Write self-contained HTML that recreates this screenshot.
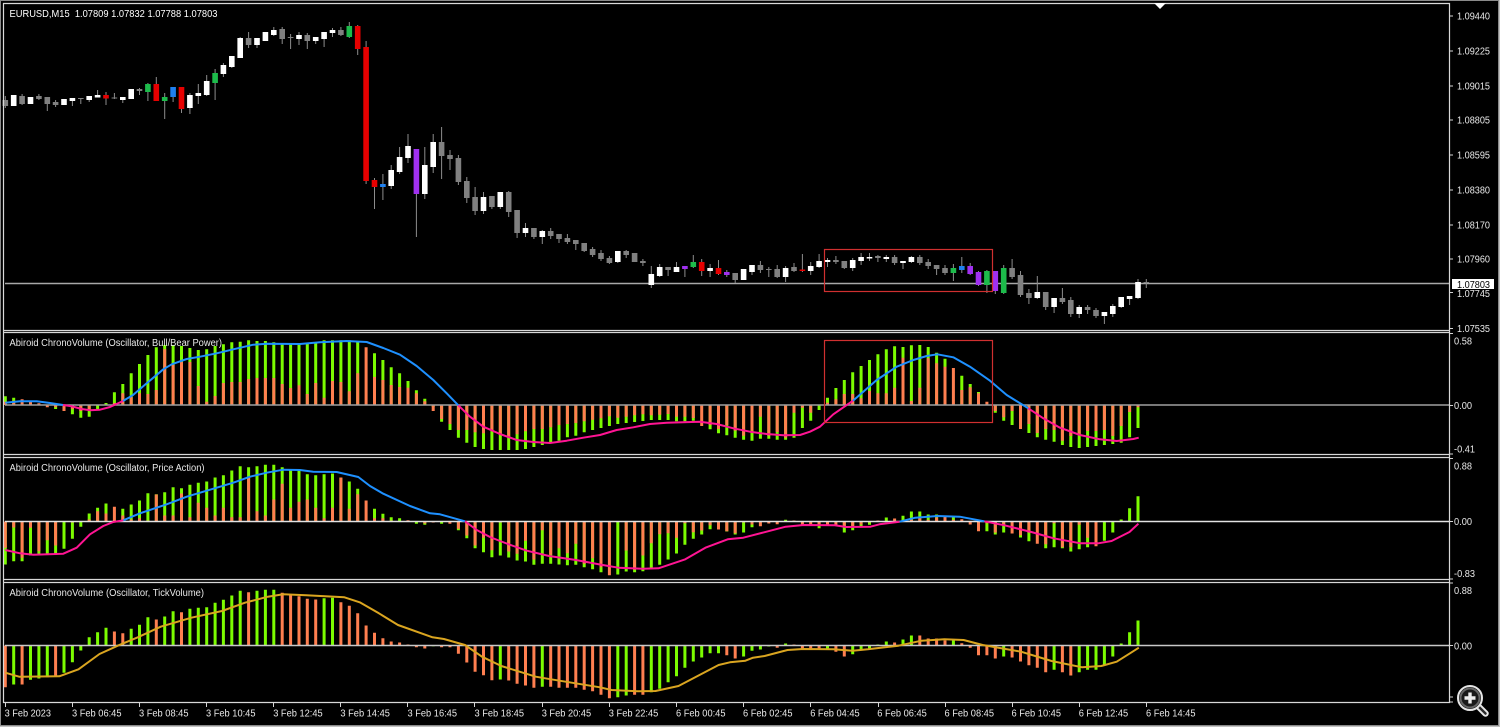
<!DOCTYPE html>
<html lang="en"><head><meta charset="utf-8"><title>EURUSD,M15</title>
<style>html,body{margin:0;padding:0;background:#000;width:1500px;height:727px;overflow:hidden}svg{display:block;filter:blur(.35px)}text{font-family:"Liberation Sans",sans-serif;font-size:10px;fill:#e8e8e8}</style></head>
<body>
<svg width="1500" height="727" viewBox="0 0 1500 727" xmlns="http://www.w3.org/2000/svg">
<rect width="1500" height="727" fill="#000"/>
<!-- window edges -->
<path d="M.5 0V727M0 .5H1500M1498.5 0V727M0 725.5H1500" stroke="#8a8a8a" fill="none"/>
<path d="M1499.5 0V727M0 726.5H1500" stroke="#c0c0c0" fill="none"/>
<!-- price line -->
<path d="M5 283.5H1450" stroke="#a8a8a8" stroke-width="1.4"/>
<!-- wicks -->
<path fill="none" stroke="#8c8c8c" d="M5.3 96V108M22.1 94V105M38.9 94V100M47.3 97V111M55.6 100V107M72.4 98V106M80.8 98V104M89.2 96V102M97.6 90V97M106 92V105M114.4 93V99M122.8 97V103M139.5 88V95M147.9 83V101M156.3 77V101M164.7 93V119M173.1 87V102M181.5 87V113M189.9 93V114M198.3 84V104M206.7 75V96M215.1 69V100M223.4 63V77M231.8 56V68M240.2 37V58M248.6 32V48M257 38V48M273.8 27V36M282.2 27V44M290.6 34V49M299 32V45M307.3 33V49M315.7 37V44M324.1 32V47M332.5 28V37M340.9 27V36M349.3 22V38M357.7 25V55M366.1 41V184M374.5 178V209M382.9 174V200M391.2 165V189M399.6 147V174M408 134V163M416.4 149V237M424.8 147V199M433.2 134V173M441.6 127V179M450 150V170M458.4 155V185M466.8 177V203M475.1 187V215M483.5 192V214M491.9 196V209M500.3 192V209M508.7 191V217M517.1 210V238M525.5 223V237M533.9 228V239M542.3 230V244M550.7 228V239M559 234V243M567.4 234V244M575.8 240V250M584.2 243V252M592.6 247V257M601 250V261M609.4 256V264M617.8 251V263M626.2 250V258M634.6 253V262M642.9 259V266M651.3 266V288M659.7 264V277M668.1 267V276M676.5 262V272M684.9 266V277M693.3 255V268M701.7 259V276M710.1 264V277M718.5 260V275M726.8 270V277M735.2 273V283M752 265V275M760.4 261V273M768.8 267V277M777.2 265V278M785.6 266V282M794 263V272M802.4 254V272M810.7 262V275M819.1 254V268M827.5 258V267M835.9 256V264M844.3 261V269M852.7 258V271M861.1 253V265M869.5 253V261M877.9 255V262M886.3 255V262M894.6 255V265M903 261V269M911.4 256V263M919.8 255V265M928.2 259V269M936.6 265V275M945 265V275M953.4 264V281M961.8 257V273M970.2 263V275M978.5 271V286M986.9 270V293M995.3 271V294M1003.7 265V294M1012.1 259V279M1020.5 271V297M1028.9 289V304M1037.3 276V299M1045.7 292V310M1054.1 298V313M1062.4 288V304M1070.8 297V317M1079.2 305V318M1087.6 305V314M1096 308V318M1104.4 312V324M1112.8 304V317M1121.2 297V308M1129.6 296V305M1138 279V299M1146.3 279V288"/>
<!-- white bodies -->
<path fill="none" stroke="#fff" stroke-width="5.6" d="M13.7 95V106M30.5 97V104M64 99V105M72.4 98V101M89.2 96V100M97.6 95V97.5M122.8 97V100M131.2 89V99M189.9 95V108M198.3 93V96M206.7 81V95M223.4 65V74M231.8 56V67M240.2 38V58M257 38V45M265.4 32V41M273.8 30V35M299 35V39M315.7 37V41M324.1 32V39M332.5 30V33M391.2 170V186M399.6 157V172M408 146V158M424.8 165V194M433.2 142V167M483.5 197V211M500.3 192V207M525.5 228V233M542.3 231V237M617.8 251V262M651.3 274V285M659.7 267V276M676.5 267V272M710.1 268V271M743.6 269V280M752 265V272M785.6 268V277M810.7 266V271M819.1 261V267M827.5 260V262M852.7 260V268M861.1 257V261M869.5 257V258.5M886.3 257V259M903 261V263M911.4 257V262M1037.3 292V298M1054.1 298V307M1079.2 307V314M1104.4 312V316M1112.8 306V314M1121.2 297V307M1129.6 296V299M1138 282V298"/>
<!-- gray bodies -->
<path fill="none" stroke="#808080" stroke-width="5.6" d="M5.3 100V106M22.1 96V104M38.9 96V99M47.3 97V104M55.6 102V105M80.8 98V99M114.4 97.5V98.5M139.5 89V91M248.6 38V45M282.2 29V39M290.6 37V38M307.3 35V41M340.9 30V35M441.6 142V156M450 155V159M458.4 158V182M466.8 181V198M475.1 197V211M491.9 196V207M508.7 192V212M517.1 210V233M533.9 228V237M550.7 231V236M559 234V239M567.4 238V242M575.8 240V244M584.2 243V251M592.6 249V255M601 253V259M609.4 258V263M626.2 251V255M634.6 253V262M642.9 261V263M668.1 267V270M735.2 273V280M760.4 265V270M768.8 269V270M777.2 269V277M794 267V271M835.9 260V262M844.3 261V268M877.9 256V258M894.6 257V263M919.8 257V263M928.2 262V266M936.6 265V269M945 268V273M1012.1 268V277M1020.5 275V295M1028.9 293V298M1045.7 292V307M1062.4 298V302M1070.8 300V314M1087.6 307V310M1096 310V316M1146.3 282V283"/>
<path fill="none" stroke="#e60000" stroke-width="5.6" d="M106 95V98.5M156.3 84V101M181.5 87V109M357.7 26V49M366.1 47V181M374.5 180V187M701.7 262V271M718.5 268V274M802.4 269.5V271"/>
<path fill="none" stroke="#1dbb4b" stroke-width="5.6" d="M147.9 84V92M164.7 97V101M215.1 73V83M349.3 26V37M693.3 262V267M953.4 268V273M986.9 271V285M1003.7 268V293"/>
<path fill="none" stroke="#1e80f0" stroke-width="5.6" d="M173.1 87V97M382.9 184V187M961.8 266V270"/>
<path fill="none" stroke="#a030f0" stroke-width="5.6" d="M416.4 149V194M684.9 266V269M726.8 272V275M970.2 266V274M978.5 272V285M995.3 271V291"/>
<rect x="824.5" y="249.5" width="168" height="42" fill="none" stroke="#d03030" stroke-width="1.2"/>
<!-- panel 1 -->
<g transform="translate(0 405) scale(1 -1)" fill="none" stroke-width="3">
<path stroke="#7cfc00" d="M5.3 0V8.7M13.7 0V7.3M55.6 0V-4M72.4 0V-9.3M80.8 0V-12.7M89.2 0V-11.7M97.6 0V-4.3M106 0V2M114.4 0V12.7M122.8 0V21M131.2 0V31.7M139.5 0V41M147.9 0V50M156.3 0V57.7M164.7 0V60M173.1 0V60M181.5 0V59M189.9 0V57M198.3 0V55M206.7 0V55.7M215.1 0V59M223.4 0V60.7M231.8 0V62.7M240.2 0V63.3M248.6 0V64.7M257 0V64M265.4 0V64M273.8 0V62.7M282.2 0V60.7M290.6 0V60.7M299 0V60.7M307.3 0V62.3M315.7 0V62.7M324.1 0V64.7M332.5 0V64.7M340.9 0V64.7M349.3 0V64.7M357.7 0V63.3M374.5 0V51.7M382.9 0V45M391.2 0V37.7M399.6 0V31.7M408 0V24M416.4 0V14.7M424.8 0V6.3M433.2 0V-2M441.6 0V-16.7M450 0V-25M458.4 0V-32.7M466.8 0V-37.7M475.1 0V-42M483.5 0V-44M491.9 0V-45M500.3 0V-45M508.7 0V-45M517.1 0V-45M525.5 0V-44M533.9 0V-42M542.3 0V-40M550.7 0V-37M559 0V-35.7M567.4 0V-32.3M575.8 0V-30.7M584.2 0V-27.3M592.6 0V-25M601 0V-23M609.4 0V-21M617.8 0V-19M626.2 0V-18M634.6 0V-17M642.9 0V-16M651.3 0V-15M659.7 0V-15M668.1 0V-15M676.5 0V-16.3M684.9 0V-16.3M693.3 0V-15.7M710.1 0V-24.3M718.5 0V-28.3M726.8 0V-30.3M735.2 0V-32.7M743.6 0V-34.7M752 0V-35.7M760.4 0V-33.7M768.8 0V-33.7M777.2 0V-34.7M785.6 0V-34.7M794 0V-32.7M802.4 0V-23M810.7 0V-15.7M819.1 0V-5M827.5 0V7.3M835.9 0V17M844.3 0V25M852.7 0V32.7M861.1 0V39M869.5 0V45M877.9 0V50.7M886.3 0V55.7M894.6 0V58.7M903 0V58M911.4 0V59.7M919.8 0V60M928.2 0V58M936.6 0V52.3M945 0V46.3M961.8 0V29.3M970.2 0V21M978.5 0V13M995.3 0V-7.7M1003.7 0V-15.7M1012.1 0V-20M1028.9 0V-28M1037.3 0V-32.3M1045.7 0V-34.7M1054.1 0V-36.7M1062.4 0V-40M1070.8 0V-42M1079.2 0V-43M1087.6 0V-42M1096 0V-41M1104.4 0V-40M1112.8 0V-39M1121.2 0V-37.7M1129.6 0V-32.3M1138 0V-23"/>
<path stroke="#ff7f50" d="M5.3 0V3.3M13.7 0V4.3M22.1 0V5.7M30.5 0V3.3M38.9 0V1.7M47.3 0V-2.3M55.6 0V-2.3M64 0V-6M72.4 0V-4M80.8 0V-6M89.2 0V-5M114.4 0V2M122.8 0V11.7M131.2 0V8M139.5 0V11.7M147.9 0V11M156.3 0V15M164.7 0V55.7M173.1 0V40M181.5 0V43M189.9 0V43M198.3 0V19M206.7 0V3.3M215.1 0V9M223.4 0V22M231.8 0V23M240.2 0V23M248.6 0V26M257 0V27M265.4 0V27M273.8 0V27M282.2 0V21M290.6 0V17M299 0V19.7M307.3 0V11M315.7 0V22M324.1 0V7.3M332.5 0V24M340.9 0V23M349.3 0V13.7M357.7 0V31.7M366.1 0V57.7M374.5 0V28M382.9 0V25M391.2 0V20M399.6 0V18M408 0V17.3M416.4 0V11.7M424.8 0V3.7M433.2 0V-6M441.6 0V-14M450 0V-19M458.4 0V-25M466.8 0V-25M475.1 0V-27.3M483.5 0V-28.3M491.9 0V-26M500.3 0V-30M508.7 0V-32.3M517.1 0V-29.3M525.5 0V-26.3M533.9 0V-24M542.3 0V-24M550.7 0V-22.3M559 0V-20M567.4 0V-19M575.8 0V-18M584.2 0V-16.3M592.6 0V-14.7M601 0V-13.3M609.4 0V-11.3M617.8 0V-12.7M626.2 0V-11.7M634.6 0V-10.3M642.9 0V-9.3M651.3 0V-10.3M659.7 0V-9.7M668.1 0V-9M676.5 0V-11.7M684.9 0V-11.7M693.3 0V-13M701.7 0V-21M710.1 0V-20M718.5 0V-24M726.8 0V-20M735.2 0V-25.7M743.6 0V-30.7M752 0V-25.7M760.4 0V-11.7M768.8 0V-30.7M777.2 0V-27M785.6 0V-32.7M794 0V-7.7M802.4 0V-2.7M810.7 0V-7.7M827.5 0V2.3M835.9 0V5.7M844.3 0V11M852.7 0V11M861.1 0V6.7M869.5 0V14M877.9 0V11.7M886.3 0V11.7M894.6 0V17.3M903 0V47.3M911.4 0V4M919.8 0V17.3M928.2 0V46.7M936.6 0V41.7M945 0V38.3M953.4 0V37M961.8 0V15M970.2 0V17.7M978.5 0V11.7M986.9 0V3.3M995.3 0V-6M1003.7 0V-12.3M1012.1 0V-6M1020.5 0V-24M1028.9 0V-19M1037.3 0V-28M1045.7 0V-24M1054.1 0V-25M1062.4 0V-35.7M1070.8 0V-31M1079.2 0V-30M1087.6 0V-26M1096 0V-26M1104.4 0V-25M1112.8 0V-31M1121.2 0V-21M1129.6 0V-7M1138 0V-2.3"/>
</g>
<path d="M5 405H1450" stroke="#a0a0a0" stroke-width="1.6"/>
<g fill="none" stroke-width="2" stroke-linejoin="round">
<path stroke="#1e90ff" d="M5.3 402.7L20 401.3L36.7 401.3L50 403L63 405M123 401L133 395L146.7 383.3L163.3 369.3L171.7 364.3L186.7 359L200 356.7L216.7 353.3L233.3 349.3L253.3 344.7L266.7 343.7L300 344L320 342.3L346.7 341L366.7 342L383.3 348L400 354.7L416.7 366L433.3 380L446.7 393.3L458.3 405.3"/>
<path stroke="#ff1493" d="M63 405L71.7 406.3L81.7 409L90 410.3L100 409.7L110 407L123 401M458.3 405.3L470 416.7L483.3 426.7L500 434L516.7 440L533.3 442L550 443L566.7 440.7L583.3 437.7L600 435L616.7 430L633.3 427.3L650 424L666.7 422.7L700 421.7L716.7 424L733.3 428.3L750 431.7L766.7 434L783.3 435.3L800 435L810 431.7L820 426.7L833.3 414.3L853 400.7"/>
<path stroke="#1e90ff" d="M853 400.7L876.7 380L896.7 366.7L913.3 360L926.7 356L937.3 354.3L953.3 357.3L970 366.7L990 380.7L1006.7 395L1028.3 408.3"/>
<path stroke="#ff1493" d="M1028.3 408.3L1043.3 418.3L1060 427.7L1080 435L1100 439.3L1116.7 441L1133.3 439L1138.7 437.7"/>
</g>
<rect x="824.5" y="340.5" width="168" height="82" fill="none" stroke="#d03030" stroke-width="1.2"/>
<!-- panel 2 -->
<g transform="translate(0 521.5) scale(1 -1)" fill="none" stroke-width="3">
<path stroke="#7cfc00" d="M5.3 0V-43M13.7 0V-39.7M22.1 0V-39.7M30.5 0V-34M38.9 0V-34M47.3 0V-32M55.6 0V-32M64 0V-27.3M72.4 0V-17.3M80.8 0V-5.3M89.2 0V8M97.6 0V13.7M106 0V18M122.8 0V12.7M131.2 0V17M139.5 0V21M147.9 0V28.3M156.3 0V27.3M164.7 0V29.3M173.1 0V34.3M181.5 0V33.3M189.9 0V36.7M198.3 0V38.7M206.7 0V40M215.1 0V44M223.4 0V46.3M231.8 0V51M240.2 0V55.3M248.6 0V54.3M257 0V55.3M265.4 0V56.7M273.8 0V56.7M282.2 0V54.3M290.6 0V52M299 0V51.3M307.3 0V47.3M315.7 0V46.3M324.1 0V47.3M332.5 0V48M340.9 0V43.7M349.3 0V40M357.7 0V32.7M374.5 0V12.7M382.9 0V7.7M391.2 0V4.3M399.6 0V3.3M416.4 0V-2.3M424.8 0V-3.3M441.6 0V-2.3M458.4 0V-8.7M466.8 0V-16.7M475.1 0V-26.7M483.5 0V-30.7M491.9 0V-35.7M500.3 0V-34M508.7 0V-36M517.1 0V-39M525.5 0V-40M533.9 0V-43.3M542.3 0V-42.3M550.7 0V-42.3M559 0V-43M567.4 0V-43.7M575.8 0V-43.3M584.2 0V-45.7M592.6 0V-47.7M601 0V-50.7M617.8 0V-53M626.2 0V-50M634.6 0V-50.7M642.9 0V-49.7M651.3 0V-47M659.7 0V-43.3M668.1 0V-38M676.5 0V-32M684.9 0V-23.3M693.3 0V-17.3M701.7 0V-13M710.1 0V-7.7M726.8 0V-10M735.2 0V-13M743.6 0V-11M752 0V-5.7M785.6 0V1.7M819.1 0V-6.7M844.3 0V-11M852.7 0V-8.7M861.1 0V-4.7M869.5 0V-3.3M886.3 0V4M903 0V5.7M911.4 0V10M919.8 0V10M928.2 0V7M936.6 0V7M953.4 0V5M986.9 0V-9.7M995.3 0V-13M1003.7 0V-11M1020.5 0V-16M1028.9 0V-19.7M1045.7 0V-26.7M1054.1 0V-25.7M1062.4 0V-26.7M1070.8 0V-30M1079.2 0V-27.7M1087.6 0V-25.7M1104.4 0V-19.3M1112.8 0V-11M1121.2 0V2M1129.6 0V13.3M1138 0V25.3"/>
<path stroke="#ff7f50" d="M5.3 0V-26.3M13.7 0V-6M22.1 0V-36.3M30.5 0V-6.3M38.9 0V-29.7M47.3 0V-18.7M55.6 0V-24M72.4 0V-1M89.2 0V2M97.6 0V10.3M106 0V8M114.4 0V14.7M122.8 0V6M131.2 0V2M139.5 0V3.3M147.9 0V1M156.3 0V27M164.7 0V6M173.1 0V6M181.5 0V28M189.9 0V4.3M198.3 0V18.7M206.7 0V13.7M215.1 0V6M223.4 0V13.7M231.8 0V4.3M240.2 0V4.3M248.6 0V44M257 0V10.3M265.4 0V6M273.8 0V22M282.2 0V37.7M290.6 0V13.7M299 0V19.7M307.3 0V22M315.7 0V13.7M324.1 0V3.3M332.5 0V13.7M340.9 0V44M349.3 0V12.7M357.7 0V27.3M366.1 0V21M374.5 0V3.3M382.9 0V3.3M391.2 0V1M408 0V1.3M424.8 0V-2M433.2 0V-1M449.9 0V-2.3M458.4 0V-7.3M466.8 0V-14M475.1 0V-24M483.5 0V-16.3M491.9 0V-28.7M500.3 0V-1M508.7 0V-30M517.1 0V-32.3M525.5 0V-19.3M533.9 0V-38M542.3 0V-8.7M550.7 0V-33.3M559 0V-26.7M567.4 0V-31.7M575.8 0V-22.3M584.2 0V-42.3M592.6 0V-36.7M601 0V-45.7M609.4 0V-53.7M626.2 0V-29M634.6 0V-48.3M642.9 0V-34M651.3 0V-21.7M659.7 0V-12.7M668.1 0V-11.7M676.5 0V-16.3M684.9 0V-1.7M693.3 0V-10.7M701.7 0V-9M710.1 0V-3.7M718.5 0V-8M726.8 0V-9.7M735.2 0V-11.7M743.6 0V-1M752 0V-3M760.4 0V-4.7M768.8 0V-2M777.2 0V-2.7M794 0V1M802.4 0V-4M810.7 0V-4M819.1 0V-4M827.5 0V-4M835.9 0V-4M844.3 0V-6M852.7 0V-5M861.1 0V-3M869.5 0V-1M877.9 0V1M894.6 0V3M911.4 0V1.7M919.8 0V4M928.2 0V1.7M936.6 0V4M945 0V5M953.4 0V1.7M961.8 0V2.3M970.2 0V-3M978.5 0V-9.7M986.9 0V-1.7M995.3 0V-11M1003.7 0V-3.7M1012.1 0V-12M1020.5 0V-13.7M1028.9 0V-11.3M1037.3 0V-22.3M1045.7 0V-22.7M1054.1 0V-1.7M1062.4 0V-25.7M1070.8 0V-25.7M1079.2 0V-3.3M1087.6 0V-16.3M1096 0V-24.7"/>
</g>
<path d="M5 521.5H1450" stroke="#e2e2e2" stroke-width="1.6"/>
<g fill="none" stroke-width="2" stroke-linejoin="round">
<path stroke="#ff1493" d="M5.3 550L20 553.3L33.3 554.7L63.3 553.7L76.7 547.7L90 534.3L103.3 526L113.3 522L123.3 520.3"/>
<path stroke="#1e90ff" d="M123.3 520.3L140 513.3L166.7 504.3L186.7 496.7L216.7 487.7L233.3 482.7L250 476.7L266.7 472.7L283.3 469.7L300 470L313.3 471.7L336.7 472L358.3 477L370 486L383.3 493.7L410 506L430 513.3L440 514.3L465 521.3"/>
<path stroke="#ff1493" d="M465 521.3L476.7 530L490 537L500 541L513.4 546L526.8 550.7L549.1 556L575.9 560L602.7 565L618.3 567.7L642.9 568.7L658.5 568.3L685.3 559.3L705.4 547.7L727.7 539.3L743.3 537.7L785.7 526.7L803.6 525L834.8 525.3L846 527L870.5 526.7L879.5 524.3L899.6 521.7"/>
<path stroke="#1e90ff" d="M899.6 521.7L915.2 517.7L937.5 516L959.8 516.7L984.4 521.3"/>
<path stroke="#ff1493" d="M984.4 521.3L1004.5 525.3L1031.3 532L1053.6 538.3L1080.4 543.3L1098.2 543.3L1111.6 541L1129.5 532L1138.4 523.7"/>
</g>
<!-- panel 3 -->
<g transform="translate(0 645.5) scale(1 -1)" fill="none" stroke-width="3">
<path stroke="#7cfc00" d="M13.7 0V-39M30.5 0V-34.3M38.9 0V-33M47.3 0V-31.7M64 0V-27.3M72.4 0V-16.7M80.8 0V-5M89.2 0V8.3M97.6 0V13.3M106 0V17.7M131.2 0V16.7M139.5 0V20.7M147.9 0V28.3M164.7 0V29M173.1 0V34.3M189.9 0V36.7M198.3 0V37.7M206.7 0V38.3M215.1 0V42.7M223.4 0V45.7M231.8 0V50M240.2 0V54.7M257 0V54.7M265.4 0V55.7M273.8 0V55.7M324.1 0V47.3M332.5 0V47.7M433.2 0V-.7M500.3 0V-34M542.3 0V-41.3M617.8 0V-51.7M626.2 0V-50M651.3 0V-46.7M659.7 0V-43.3M668.1 0V-36.7M676.5 0V-30.7M684.9 0V-22.3M693.3 0V-16M701.7 0V-12M710.1 0V-7.7M718.5 0V-7.7M743.6 0V-11M752 0V-5.3M760.4 0V-4M768.8 0V-1M785.6 0V2M827.5 0V-4M852.7 0V-8.7M861.1 0V-4.7M869.5 0V-3.3M877.9 0V1M886.3 0V4M903 0V6M911.4 0V10M953.4 0V5M1003.7 0V-11M1054.1 0V-24.3M1079.2 0V-26.7M1087.6 0V-24.3M1096 0V-24.3M1104.4 0V-19M1112.8 0V-11M1121.2 0V2M1129.6 0V13.3M1138 0V25"/>
<path stroke="#ff7f50" d="M5.3 0V-41.7M22.1 0V-39M55.6 0V-31M114.4 0V14M122.8 0V12.3M156.3 0V26M181.5 0V33.3M248.6 0V53.3M282.2 0V52.7M290.6 0V50M299 0V49.3M307.3 0V46.7M315.7 0V46M340.9 0V43.3M349.3 0V39.7M357.7 0V32.3M366.1 0V20M374.5 0V12.7M382.9 0V7.3M391.2 0V4M399.6 0V3M408 0V1M416.4 0V-1.7M424.8 0V-3M441.6 0V-1.7M450 0V-1.7M458.4 0V-8.3M466.8 0V-17M475.1 0V-26.3M483.5 0V-29.7M491.9 0V-34.7M508.7 0V-35M517.1 0V-38.3M525.5 0V-40M533.9 0V-42.3M550.7 0V-41.3M559 0V-42.3M567.4 0V-42.3M575.8 0V-42.3M584.2 0V-44.3M592.6 0V-45.7M601 0V-49.3M609.4 0V-52.7M634.6 0V-49.3M642.9 0V-49.3M726.8 0V-9.7M735.2 0V-13M777.2 0V-2.3M794 0V1M802.4 0V-4M810.7 0V-4M819.1 0V-4M835.9 0V-6.3M844.3 0V-11M894.6 0V3M919.8 0V10M928.2 0V7M936.6 0V7M945 0V5M961.8 0V2.3M970.2 0V-2.3M978.5 0V-9.7M986.9 0V-9.7M995.3 0V-13M1012.1 0V-12M1020.5 0V-16M1028.9 0V-19.7M1037.3 0V-22.3M1045.7 0V-26.7M1062.4 0V-26.7M1070.8 0V-30"/>
</g>
<path d="M5 645.5H1450" stroke="#c8c8c8" stroke-width="1.6"/>
<g fill="none" stroke="#daa520" stroke-width="2" stroke-linejoin="round">
<path d="M5.3 672.7L19.1 676.7L59.3 676.3L78.5 669.3L99.5 654L118.6 645.3L137.8 637.3L160.7 626.7L191.4 617.7L222 611L245 602.7L267.9 596.7L283.2 594.3L306.2 595.3L344.4 597.3L359.7 602.3L378.9 613.3L398 625L432.5 637.3L443.9 639L465 645L482 656.7L501.3 666L535.8 676.7L551.1 679.3L600 687.3L611.5 690L638.3 691.3L655.5 691L678.5 686L718.6 665L729.9 662.3L745.4 660.7L753 657.7L764.6 656L787.5 650L802.8 649L833.4 649.3L852.6 650.7L867.9 649.3L898.5 645.7L921.5 640.7L944.4 639.3L963.6 640L982.7 645L1021 651.7L1051.6 661L1082.2 667.3L1101.3 666L1116.7 661.7L1130 653.3L1138.8 647.7"/>
</g>
<!-- frame -->
<path fill="none" stroke="#d8d8d8" stroke-width="1.2" d="M3.5 3.5H1449.5V702.5H3.5ZM3.5 330.5H1449.5M3.5 332.5H1449.5M3.5 454.5H1449.5M3.5 457.5H1449.5M3.5 579.5H1449.5M3.5 582.5H1449.5"/>
<path fill="#fff" d="M1154 3H1166L1160 9Z"/>
<!-- axis ticks -->
<path fill="none" stroke="#d4d4d4" d="M1450 16H1453M1450 51H1453M1450 86H1453M1450 120H1453M1450 155H1453M1450 190H1453M1450 225H1453M1450 259H1453M1450 292.5H1453M1450 328.5H1453M1450 333.5H1453M1450 405.5H1453M1450 454H1453M1450 458.5H1453M1450 521.5H1453M1450 579H1453M1450 583H1453M1450 645.5H1453M1450 697H1453M1450 702H1453"/>
<path fill="none" stroke="#d4d4d4" d="M5.5 703V707M72.5 703V707M139.5 703V707M206.5 703V707M273.5 703V707M340.5 703V707M407.5 703V707M474.5 703V707M542.5 703V707M609.5 703V707M676.5 703V707M743.5 703V707M810.5 703V707M878.5 703V707M945.5 703V707M1012.5 703V707M1079.5 703V707M1146.5 703V707"/>
<!-- text -->
<text x="9.5" y="17" textLength="208" lengthAdjust="spacingAndGlyphs" style="fill:#fff">EURUSD,M15&#160;&#160;1.07809 1.07832 1.07788 1.07803</text>
<text x="9.5" y="346" textLength="212.5" lengthAdjust="spacingAndGlyphs">Abiroid ChronoVolume (Oscillator, Bull/Bear Power)</text>
<text x="9.5" y="471" textLength="195" lengthAdjust="spacingAndGlyphs">Abiroid ChronoVolume (Oscillator, Price Action)</text>
<text x="9.5" y="596" textLength="194.5" lengthAdjust="spacingAndGlyphs">Abiroid ChronoVolume (Oscillator, TickVolume)</text>
<g>
<text x="1457" y="19.5" textLength="33" lengthAdjust="spacingAndGlyphs">1.09440</text>
<text x="1457" y="54.5" textLength="33" lengthAdjust="spacingAndGlyphs">1.09225</text>
<text x="1457" y="89.5" textLength="33" lengthAdjust="spacingAndGlyphs">1.09015</text>
<text x="1457" y="123.5" textLength="33" lengthAdjust="spacingAndGlyphs">1.08805</text>
<text x="1457" y="158.5" textLength="33" lengthAdjust="spacingAndGlyphs">1.08595</text>
<text x="1457" y="193.5" textLength="33" lengthAdjust="spacingAndGlyphs">1.08380</text>
<text x="1457" y="228.5" textLength="33" lengthAdjust="spacingAndGlyphs">1.08170</text>
<text x="1457" y="262.5" textLength="33" lengthAdjust="spacingAndGlyphs">1.07960</text>
<text x="1457" y="297" textLength="33" lengthAdjust="spacingAndGlyphs">1.07745</text>
<text x="1457" y="332" textLength="33" lengthAdjust="spacingAndGlyphs">1.07535</text>
<rect x="1452" y="279" width="42" height="10" fill="#fff"/>
<text x="1457" y="288" textLength="33" lengthAdjust="spacingAndGlyphs" style="fill:#000">1.07803</text>
<text x="1454" y="344.5" textLength="18" lengthAdjust="spacingAndGlyphs">0.58</text>
<text x="1454" y="409" textLength="18" lengthAdjust="spacingAndGlyphs">0.00</text>
<text x="1454" y="452.5" textLength="21" lengthAdjust="spacingAndGlyphs">-0.41</text>
<text x="1454" y="469.5" textLength="18" lengthAdjust="spacingAndGlyphs">0.88</text>
<text x="1454" y="525" textLength="18" lengthAdjust="spacingAndGlyphs">0.00</text>
<text x="1454" y="577" textLength="21" lengthAdjust="spacingAndGlyphs">-0.83</text>
<text x="1454" y="594" textLength="18" lengthAdjust="spacingAndGlyphs">0.88</text>
<text x="1454" y="649.5" textLength="18" lengthAdjust="spacingAndGlyphs">0.00</text>
</g>
<g>
<text x="4.6" y="716.5" textLength="46.4" lengthAdjust="spacingAndGlyphs">3 Feb 2023</text>
<text x="72" y="716.5" textLength="49.5" lengthAdjust="spacingAndGlyphs">3 Feb 06:45</text>
<text x="139" y="716.5" textLength="49.5" lengthAdjust="spacingAndGlyphs">3 Feb 08:45</text>
<text x="206" y="716.5" textLength="49.5" lengthAdjust="spacingAndGlyphs">3 Feb 10:45</text>
<text x="273.2" y="716.5" textLength="49.5" lengthAdjust="spacingAndGlyphs">3 Feb 12:45</text>
<text x="340.4" y="716.5" textLength="49.5" lengthAdjust="spacingAndGlyphs">3 Feb 14:45</text>
<text x="407.5" y="716.5" textLength="49.5" lengthAdjust="spacingAndGlyphs">3 Feb 16:45</text>
<text x="474.5" y="716.5" textLength="49.5" lengthAdjust="spacingAndGlyphs">3 Feb 18:45</text>
<text x="541.7" y="716.5" textLength="49.5" lengthAdjust="spacingAndGlyphs">3 Feb 20:45</text>
<text x="608.8" y="716.5" textLength="49.5" lengthAdjust="spacingAndGlyphs">3 Feb 22:45</text>
<text x="676" y="716.5" textLength="49.5" lengthAdjust="spacingAndGlyphs">6 Feb 00:45</text>
<text x="743" y="716.5" textLength="49.5" lengthAdjust="spacingAndGlyphs">6 Feb 02:45</text>
<text x="810.2" y="716.5" textLength="49.5" lengthAdjust="spacingAndGlyphs">6 Feb 04:45</text>
<text x="877.3" y="716.5" textLength="49.5" lengthAdjust="spacingAndGlyphs">6 Feb 06:45</text>
<text x="944.5" y="716.5" textLength="49.5" lengthAdjust="spacingAndGlyphs">6 Feb 08:45</text>
<text x="1011.5" y="716.5" textLength="49.5" lengthAdjust="spacingAndGlyphs">6 Feb 10:45</text>
<text x="1078.7" y="716.5" textLength="49.5" lengthAdjust="spacingAndGlyphs">6 Feb 12:45</text>
<text x="1146" y="716.5" textLength="49.5" lengthAdjust="spacingAndGlyphs">6 Feb 14:45</text>
</g>
<!-- magnifier -->
<g fill="none" stroke-linecap="round">
<path d="M1478 706L1485.5 713.5" stroke="#e6e6e6" stroke-width="6.5"/>
<path d="M1478 706L1485.5 713.5" stroke="#2a2a2a" stroke-width="2.5"/>
<circle cx="1470" cy="698" r="12" fill="#111" stroke="#e6e6e6" stroke-width="2"/>
<circle cx="1470" cy="698" r="9.5" fill="#1a1a1a" stroke="#666" stroke-width="2"/>
<path d="M1464.5 698H1475.5M1470 692.5V703.5" stroke="#eee" stroke-width="3.4" stroke-linecap="butt"/>
</g>
</svg>
</body></html>
